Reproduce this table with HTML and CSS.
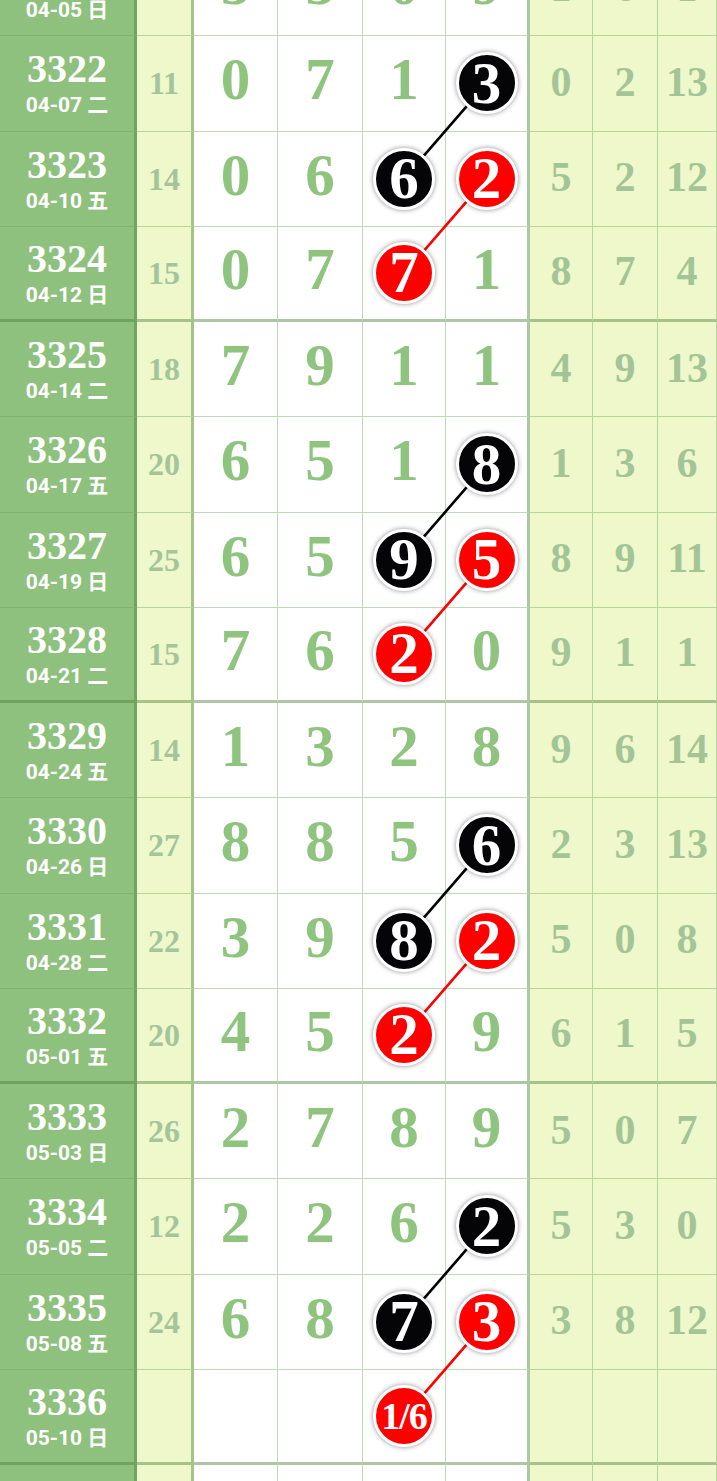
FILE: index.html
```html
<!DOCTYPE html>
<html lang="zh-CN">
<head>
    <meta charset="UTF-8">
    <meta name="viewport" content="width=device-width, initial-scale=1.0">
    <title>走势图</title>
    <link rel="stylesheet" href="styles.css">
</head>
<body>
    <div class="chart">
        <svg class="links" width="717" height="1620">
            <!-- 连线: 黑球 / 红球 -->
            <line class="black" x1="486.5" y1="142.4" x2="404" y2="237.6"></line>
            <line class="red" x1="486.5" y1="237.6" x2="404" y2="332.8"></line>
            <line class="black" x1="486.5" y1="523.4" x2="404" y2="618.6"></line>
            <line class="red" x1="486.5" y1="618.6" x2="404" y2="713.8"></line>
            <line class="black" x1="486.5" y1="904.4" x2="404" y2="999.6"></line>
            <line class="red" x1="486.5" y1="999.6" x2="404" y2="1094.8"></line>
            <line class="black" x1="486.5" y1="1285.4" x2="404" y2="1380.6"></line>
            <line class="red" x1="486.5" y1="1380.6" x2="404" y2="1475.8"></line>
        </svg>

        <div class="row">
            <div class="cell issue"><span class="no">3321</span><span class="date">04-05 日</span></div>
            <div class="cell sum">17</div>
            <div class="cell num">5</div>
            <div class="cell num">5</div>
            <div class="cell num">0</div>
            <div class="cell num wall">9</div>
            <div class="cell gap">1</div>
            <div class="cell gap">6</div>
            <div class="cell gap">1</div>
        </div>
        <div class="row">
            <div class="cell issue"><span class="no">3322</span><span class="date">04-07 二</span></div>
            <div class="cell sum">11</div>
            <div class="cell num">0</div>
            <div class="cell num">7</div>
            <div class="cell num">1</div>
            <div class="cell num wall hit"><span class="ball black">3</span></div>
            <div class="cell gap">0</div>
            <div class="cell gap">2</div>
            <div class="cell gap">13</div>
        </div>
        <div class="row">
            <div class="cell issue"><span class="no">3323</span><span class="date">04-10 五</span></div>
            <div class="cell sum">14</div>
            <div class="cell num">0</div>
            <div class="cell num">6</div>
            <div class="cell num hit"><span class="ball black">6</span></div>
            <div class="cell num wall hit"><span class="ball red">2</span></div>
            <div class="cell gap">5</div>
            <div class="cell gap">2</div>
            <div class="cell gap">12</div>
        </div>
        <div class="row end">
            <div class="cell issue"><span class="no">3324</span><span class="date">04-12 日</span></div>
            <div class="cell sum">15</div>
            <div class="cell num">0</div>
            <div class="cell num">7</div>
            <div class="cell num hit"><span class="ball red">7</span></div>
            <div class="cell num wall">1</div>
            <div class="cell gap">8</div>
            <div class="cell gap">7</div>
            <div class="cell gap">4</div>
        </div>

        <div class="row">
            <div class="cell issue"><span class="no">3325</span><span class="date">04-14 二</span></div>
            <div class="cell sum">18</div>
            <div class="cell num">7</div>
            <div class="cell num">9</div>
            <div class="cell num">1</div>
            <div class="cell num wall">1</div>
            <div class="cell gap">4</div>
            <div class="cell gap">9</div>
            <div class="cell gap">13</div>
        </div>
        <div class="row">
            <div class="cell issue"><span class="no">3326</span><span class="date">04-17 五</span></div>
            <div class="cell sum">20</div>
            <div class="cell num">6</div>
            <div class="cell num">5</div>
            <div class="cell num">1</div>
            <div class="cell num wall hit"><span class="ball black">8</span></div>
            <div class="cell gap">1</div>
            <div class="cell gap">3</div>
            <div class="cell gap">6</div>
        </div>
        <div class="row">
            <div class="cell issue"><span class="no">3327</span><span class="date">04-19 日</span></div>
            <div class="cell sum">25</div>
            <div class="cell num">6</div>
            <div class="cell num">5</div>
            <div class="cell num hit"><span class="ball black">9</span></div>
            <div class="cell num wall hit"><span class="ball red">5</span></div>
            <div class="cell gap">8</div>
            <div class="cell gap">9</div>
            <div class="cell gap">11</div>
        </div>
        <div class="row end">
            <div class="cell issue"><span class="no">3328</span><span class="date">04-21 二</span></div>
            <div class="cell sum">15</div>
            <div class="cell num">7</div>
            <div class="cell num">6</div>
            <div class="cell num hit"><span class="ball red">2</span></div>
            <div class="cell num wall">0</div>
            <div class="cell gap">9</div>
            <div class="cell gap">1</div>
            <div class="cell gap">1</div>
        </div>

        <div class="row">
            <div class="cell issue"><span class="no">3329</span><span class="date">04-24 五</span></div>
            <div class="cell sum">14</div>
            <div class="cell num">1</div>
            <div class="cell num">3</div>
            <div class="cell num">2</div>
            <div class="cell num wall">8</div>
            <div class="cell gap">9</div>
            <div class="cell gap">6</div>
            <div class="cell gap">14</div>
        </div>
        <div class="row">
            <div class="cell issue"><span class="no">3330</span><span class="date">04-26 日</span></div>
            <div class="cell sum">27</div>
            <div class="cell num">8</div>
            <div class="cell num">8</div>
            <div class="cell num">5</div>
            <div class="cell num wall hit"><span class="ball black">6</span></div>
            <div class="cell gap">2</div>
            <div class="cell gap">3</div>
            <div class="cell gap">13</div>
        </div>
        <div class="row">
            <div class="cell issue"><span class="no">3331</span><span class="date">04-28 二</span></div>
            <div class="cell sum">22</div>
            <div class="cell num">3</div>
            <div class="cell num">9</div>
            <div class="cell num hit"><span class="ball black">8</span></div>
            <div class="cell num wall hit"><span class="ball red">2</span></div>
            <div class="cell gap">5</div>
            <div class="cell gap">0</div>
            <div class="cell gap">8</div>
        </div>
        <div class="row end">
            <div class="cell issue"><span class="no">3332</span><span class="date">05-01 五</span></div>
            <div class="cell sum">20</div>
            <div class="cell num">4</div>
            <div class="cell num">5</div>
            <div class="cell num hit"><span class="ball red">2</span></div>
            <div class="cell num wall">9</div>
            <div class="cell gap">6</div>
            <div class="cell gap">1</div>
            <div class="cell gap">5</div>
        </div>

        <div class="row">
            <div class="cell issue"><span class="no">3333</span><span class="date">05-03 日</span></div>
            <div class="cell sum">26</div>
            <div class="cell num">2</div>
            <div class="cell num">7</div>
            <div class="cell num">8</div>
            <div class="cell num wall">9</div>
            <div class="cell gap">5</div>
            <div class="cell gap">0</div>
            <div class="cell gap">7</div>
        </div>
        <div class="row">
            <div class="cell issue"><span class="no">3334</span><span class="date">05-05 二</span></div>
            <div class="cell sum">12</div>
            <div class="cell num">2</div>
            <div class="cell num">2</div>
            <div class="cell num">6</div>
            <div class="cell num wall hit"><span class="ball black">2</span></div>
            <div class="cell gap">5</div>
            <div class="cell gap">3</div>
            <div class="cell gap">0</div>
        </div>
        <div class="row">
            <div class="cell issue"><span class="no">3335</span><span class="date">05-08 五</span></div>
            <div class="cell sum">24</div>
            <div class="cell num">6</div>
            <div class="cell num">8</div>
            <div class="cell num hit"><span class="ball black">7</span></div>
            <div class="cell num wall hit"><span class="ball red">3</span></div>
            <div class="cell gap">3</div>
            <div class="cell gap">8</div>
            <div class="cell gap">12</div>
        </div>
        <div class="row end">
            <div class="cell issue"><span class="no">3336</span><span class="date">05-10 日</span></div>
            <div class="cell sum"></div>
            <div class="cell num"></div>
            <div class="cell num"></div>
            <div class="cell num hit"><span class="ball red small">1/6</span></div>
            <div class="cell num wall"></div>
            <div class="cell gap"></div>
            <div class="cell gap"></div>
            <div class="cell gap"></div>
        </div>

        <div class="row">
            <div class="cell issue"></div>
            <div class="cell sum"></div>
            <div class="cell num"></div>
            <div class="cell num"></div>
            <div class="cell num"></div>
            <div class="cell num wall"></div>
            <div class="cell gap"></div>
            <div class="cell gap"></div>
            <div class="cell gap"></div>
        </div>
    </div>
</body>
</html>
```

FILE: styles.css
```css
html, body {
    margin: 0;
    padding: 0;
    overflow: hidden;
    background-color: #ffffff;
}
.chart {
    position: relative;
    width: 717px;
    margin-top: -59px;
    font-family: "Liberation Serif", "DejaVu Serif", serif;
    font-weight: bold;
}
.links {
    position: absolute;
    top: 0;
    left: 0;
    z-index: 1;
}
.links line {
    stroke-width: 2.6;
}
.links line.black {
    stroke: #000000;
}
.links line.red {
    stroke: #ff0000;
}
.row {
    display: grid;
    grid-template-columns: 137px 57px 84px 85px 83px 84px 63px 65px 59px;
    height: 95.25px;
}
.cell {
    box-sizing: border-box;
    display: flex;
    align-items: center;
    justify-content: center;
    border-right: 1px solid rgba(100, 160, 80, 0.4);
    border-bottom: 1px solid rgba(100, 160, 80, 0.4);
    line-height: 1;
}
.row.end .cell {
    border-bottom: 3px solid rgba(80, 130, 60, 0.45);
}
.issue {
    flex-direction: column;
    background-color: #8ec07e;
    color: #ffffff;
    border-right: 3px solid rgba(60, 110, 45, 0.35);
}
.issue .no {
    font-size: 40px;
    line-height: 40px;
}
.issue .date {
    margin-top: 4px;
    font-family: Roboto, "Noto Sans CJK SC", sans-serif;
    font-size: 21px;
    line-height: 24px;
}
.sum {
    background-color: #eff8cb;
    color: #a4c59a;
    font-size: 32px;
    border-right: 3px solid rgba(80, 130, 60, 0.45);
}
.num {
    color: #8fc47f;
    font-size: 59px;
    padding-bottom: 7px;
}
.num.hit {
    padding-bottom: 0;
}
.num.wall {
    border-right: 3px solid rgba(80, 130, 60, 0.45);
}
.gap {
    background-color: #eff8cb;
    color: #a3c596;
    font-size: 42px;
    padding-bottom: 3px;
}
.ball {
    position: relative;
    z-index: 2;
    display: flex;
    align-items: center;
    justify-content: center;
    width: 56px;
    height: 56px;
    border: 3px solid #ffffff;
    border-radius: 50%;
    box-shadow: 0 0 5px rgba(0, 0, 0, 0.45);
    color: #ffffff;
    font-size: 59px;
}
.ball.black {
    background-color: #050508;
}
.ball.red {
    background-color: #ff0000;
}
.ball.small {
    font-size: 38px;
    letter-spacing: -1px;
}
```
